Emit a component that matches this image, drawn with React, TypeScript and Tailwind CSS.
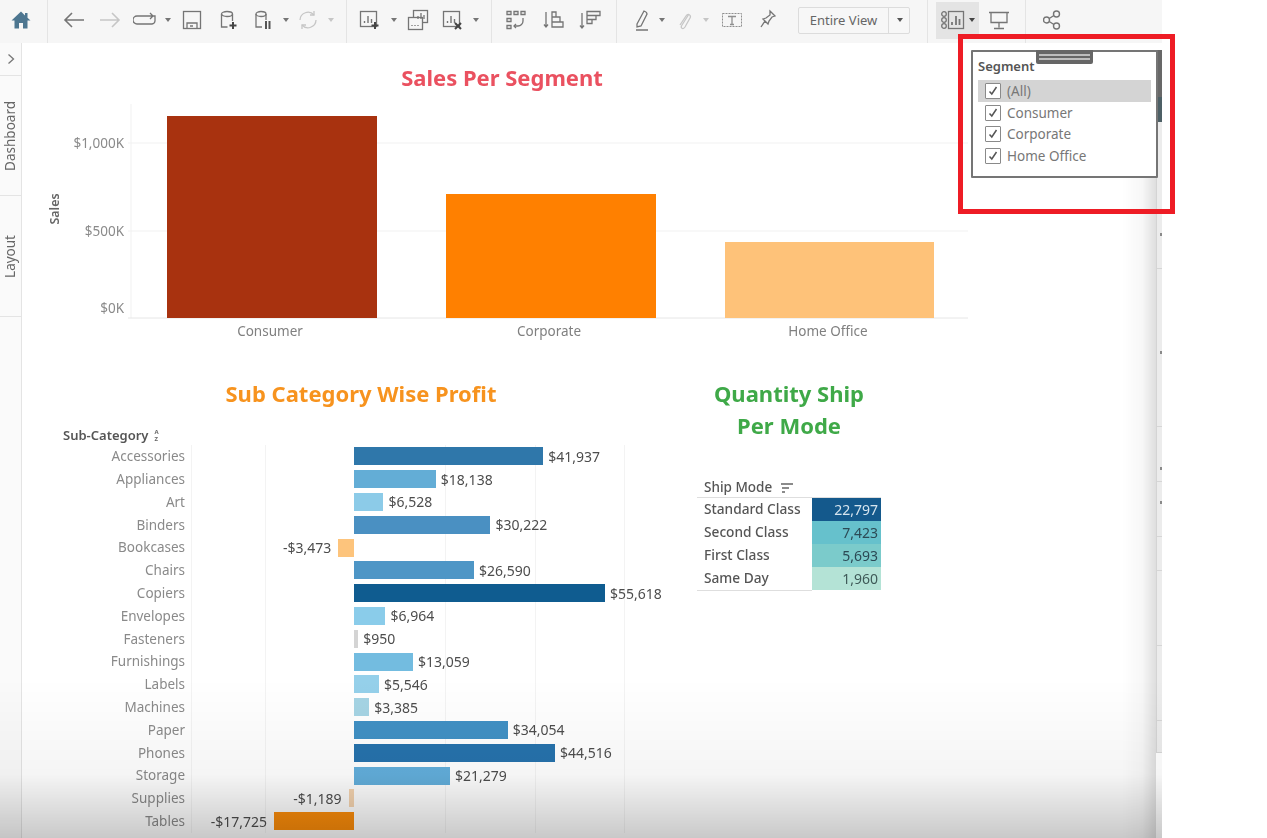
import { FC, ReactNode } from "react";

const font = "font-['Noto_Sans',sans-serif]";

const subCategories = [
	{ name: "Accessories", profit: 41937, color: "#2f77aa" },
	{ name: "Appliances", profit: 18138, color: "#63add6" },
	{ name: "Art", profit: 6528, color: "#8ccbe8" },
	{ name: "Binders", profit: 30222, color: "#4a90c2" },
	{ name: "Bookcases", profit: -3473, color: "#fdc47c" },
	{ name: "Chairs", profit: 26590, color: "#4e96c6" },
	{ name: "Copiers", profit: 55618, color: "#0f5c90" },
	{ name: "Envelopes", profit: 6964, color: "#8accea" },
	{ name: "Fasteners", profit: 950, color: "#d4d4d4" },
	{ name: "Furnishings", profit: 13059, color: "#73bce0" },
	{ name: "Labels", profit: 5546, color: "#95d0ea" },
	{ name: "Machines", profit: 3385, color: "#a5d4e4" },
	{ name: "Paper", profit: 34054, color: "#4090c4" },
	{ name: "Phones", profit: 44516, color: "#2672ac" },
	{ name: "Storage", profit: 21279, color: "#62aedb" },
	{ name: "Supplies", profit: -1189, color: "#f5d4b0" },
	{ name: "Tables", profit: -17725, color: "#fb8c0a" },
];

const shipModes = [
	{ name: "Standard Class", qty: "22,797", bg: "bg-[#14598c]", text: "text-[#d5e4ee]" },
	{ name: "Second Class", qty: "7,423", bg: "bg-[#66c1cc]", text: "text-[#2c4a55]" },
	{ name: "First Class", qty: "5,693", bg: "bg-[#7bcbcb]", text: "text-[#2c4a55]" },
	{ name: "Same Day", qty: "1,960", bg: "bg-[#b4e3d6]", text: "text-[#3f5a58]" },
];

const stripSegments = [
	{ h: 149, dot: 113 },
	{ h: 158, dot: 82 },
	{ h: 55, dot: 40 },
	{ h: 55, dot: 19 },
	{ h: 34 },
	{ h: 75 },
	{ h: 75 },
	{ h: 32 },
];

const PX_PER_DOLLAR = 0.004513;

const money = (n: number) =>
	`${n < 0 ? "-" : ""}$${Math.abs(n).toLocaleString("en-US")}`;

const Icon: FC<{ w?: number; className?: string; children: ReactNode }> = ({
	w = 22,
	className = "",
	children,
}) => (
	<svg
		width={w}
		height={22}
		viewBox={`0 0 ${w} 22`}
		fill="none"
		stroke="currentColor"
		strokeWidth={1.3}
		className={`shrink-0 ${className}`}
	>
		{children}
	</svg>
);

const Caret: FC<{ className?: string }> = ({ className = "" }) => (
	<svg width="6" height="4" viewBox="0 0 6 4" className={`shrink-0 ${className}`}>
		<path d="M0 0h6L3 4z" fill="currentColor" />
	</svg>
);

const Sep: FC<{ className?: string }> = ({ className = "" }) => (
	<div className={`h-[43px] w-px shrink-0 self-start bg-[#e4e4e4] ${className}`} />
);

const MiniChart = () => (
	<>
		<rect x="1.5" y="2.5" width="16" height="15" />
		<path d="M5.5 14v-2M9 14V7M12.5 14v-4" strokeWidth="1.4" />
	</>
);

const Toolbar = () => (
	<div className="flex h-[43px] shrink-0 items-center bg-[#f6f6f6] pb-[3px] text-[#757575]">
		<svg width="20" height="20" viewBox="0 0 20 20" className="ml-[11px] shrink-0 text-[#4d7690]">
			<path d="M10 1.5 0.5 10.5h3V18.5h4.5v-5.5h4v5.5h4.5V10.5h3l-3-2.8V3h-2.5v2.4z" fill="currentColor" />
		</svg>
		<Sep className="ml-[16px]" />
		<Icon className="ml-[15px]">
			<path d="M21 11H2M9 4 2 11l7 7" strokeWidth="1.6" />
		</Icon>
		<Icon className="ml-[14px] text-[#c6c6c6]">
			<path d="M1 11h19M13 4l7 7-7 7" strokeWidth="1.6" />
		</Icon>
		<Icon w={24} className="ml-[12px]">
			<path d="M17 7H4a3.5 3.5 0 0 0 0 8h15a3.5 3.5 0 0 0 3-3V7h-5zM17 4l3 3-3 3" />
		</Icon>
		<Caret className="ml-[8px]" />
		<Icon className="ml-[10px]">
			<rect x="2.5" y="2.5" width="17" height="17" />
			<path d="M6 19v-5h10v5M9 17h3" />
		</Icon>
		<Icon w={20} className="ml-[16px]">
			<ellipse cx="8" cy="5" rx="5.5" ry="2.5" />
			<path d="M2.5 5v13h6M13.5 5v7" />
			<path d="M14 13v7M10.5 16.500h7" strokeWidth="2" stroke="#444" />
		</Icon>
		<Icon w={18} className="ml-[15px]">
			<ellipse cx="7" cy="5" rx="5" ry="2.500" />
			<path d="M2 5v13h6M12 5v6" />
			<path d="M11 12h2v8h-2zM14.500 12h2v8h-2z" fill="#555" stroke="none" />
		</Icon>
		<Caret className="ml-[11px]" />
		<Icon className="ml-[8px] text-[#c6c6c6]">
			<path d="M3 11a8 8 0 0 1 14-5M19 11a8 8 0 0 1-14 5" />
			<path d="M17 2v4h-4M5 20v-4h4" />
		</Icon>
		<Caret className="ml-[9px] text-[#c6c6c6]" />
		<Sep className="ml-[12px]" />
		<Icon className="ml-[12px]">
			<MiniChart />
			<path d="M16 13v7M12.500 16.500h7" strokeWidth="2" stroke="#444" />
		</Icon>
		<Caret className="ml-[10px]" />
		<Icon className="ml-[10px]">
			<rect x="6.500" y="1.500" width="14" height="12" />
			<rect x="1.500" y="8.500" width="14" height="12" fill="#f6f6f6" />
			<path d="M11 10V7M14 10V4M17 10V6M5 17v-1M8 17v-1M11 17v-1" />
		</Icon>
		<Icon className="ml-[13px]">
			<MiniChart />
			<path d="m13 14 6 6M19 14l-6 6" strokeWidth="2" stroke="#444" />
		</Icon>
		<Caret className="ml-[9px]" />
		<Sep className="ml-[12px]" />
		<Icon className="ml-[13px]">
			<path d="M2 2.500h4v3H2zM9 2.500h4v3H9zM16 2.500h4v3h-4zM2 9.500h4v3H2zM2 16.500h4v3H2z" />
			<path d="M18 9v3a5 5 0 0 1-5 5H9" />
			<path d="m11 15-2 2 2 2" />
		</Icon>
		<Icon className="ml-[16px]">
			<path d="M3 3v15M1 15.500 3 18l2-2.500" />
			<path d="M9 3h4v5H9zM9 8h8v5H9zM9 13h11v5H9z" />
		</Icon>
		<Icon className="ml-[14px]">
			<path d="M3 4v15M1 16.500 3 19l2-2.500" />
			<path d="M8 2.500h13v4H8zM8 6.500h9v4H8zM8 10.500h5v4H8z" />
		</Icon>
		<Sep className="ml-[15px]" />
		<Icon w={14} className="ml-[18px]">
			<path d="M2 15 9 2q3 1 3 3L6 17l-4 1zM1 21h12" />
		</Icon>
		<Caret className="ml-[10px]" />
		<Icon w={15} className="ml-[12px] text-[#c6c6c6]">
			<path d="M12 5 5 16c-2 3 1 5 3 2l5-9c1.500-3-2-5-4-2L3 16" />
		</Icon>
		<Caret className="ml-[11px] text-[#c6c6c6]" />
		<svg width="20" height="20" viewBox="0 0 20 20" className="ml-[13px] shrink-0 text-[#8f8f8f]">
			<rect x="0.500" y="3.500" width="19" height="13" fill="none" stroke="currentColor" strokeDasharray="2 1" />
			<path d="M6 6.500h8M10 6.500v8M8 14.500h4" fill="none" stroke="currentColor" strokeWidth="1.300" />
		</svg>
		<Icon w={16} className="ml-[18px]">
			<path d="M10 2 15 7l-3 1-3 4-1 3-5-5 3-1 4-3zM5 12l-4 6" />
		</Icon>
		<div className="ml-[22px] flex h-[27px] w-[112px] shrink-0 items-center rounded-[2px] border border-[#dcdcdc] bg-[#f7f7f7]">
			<span className={`w-[89px] text-center text-[13px] leading-none text-[#666] ${font}`}>Entire View</span>
			<div className="h-full w-px bg-[#dcdcdc]" />
			<Caret className="ml-[8px] text-[#555]" />
		</div>
		<Sep className="ml-[17px]" />
		<div className="ml-[8px] flex h-[37px] w-[43px] shrink-0 items-center bg-[#e4e4e4] pl-[5px]">
			<svg width="24" height="20" viewBox="0 0 24 20" fill="none" stroke="currentColor" strokeWidth="1.300" className="shrink-0">
				<circle cx="3" cy="4" r="2.300" />
				<circle cx="3" cy="10" r="2.300" />
				<circle cx="3" cy="16" r="2.300" />
				<rect x="7.500" y="1.500" width="15" height="17" />
				<path d="M11 15v-3M15 15V6M18.500 15V9" strokeWidth="1.800" />
			</svg>
			<Caret className="ml-[4px] text-[#444]" />
		</div>
		<Icon className="ml-[9px]">
			<path d="M1 3.500h20M3 3.500v10h16v-10M11 13.500v5M6 19.500h10" />
		</Icon>
		<Sep className="ml-[15px]" />
		<svg width="18" height="20" viewBox="0 0 18 20" fill="none" stroke="currentColor" strokeWidth="1.400" className="ml-[17px] shrink-0">
			<circle cx="13.500" cy="4" r="3" />
			<circle cx="3.500" cy="10" r="3" />
			<circle cx="13.500" cy="16" r="3" />
			<path d="m6.200 8.500 4.700-3M6.200 11.500l4.700 3" />
		</svg>
	</div>
);

const SideRail = () => (
	<div className={`flex w-[22px] shrink-0 flex-col border-r border-[#e4e4e4] bg-[#fafafa] text-[13.5px] text-[#666] ${font}`}>
		<div className="flex h-[33px] items-center justify-center border-b border-[#e4e4e4]">
			<svg width="8" height="12" viewBox="0 0 8 12" fill="none" stroke="#777" strokeWidth="1.300">
				<path d="m1.500 1.500 5 4.500-5 4.500" />
			</svg>
		</div>
		<div className="flex h-[120px] items-center justify-center border-b border-[#e4e4e4]">
			<span className="rotate-180 leading-none [writing-mode:vertical-rl]">Dashboard</span>
		</div>
		<div className="flex h-[121px] items-center justify-center border-b border-[#e4e4e4]">
			<span className="rotate-180 leading-none [writing-mode:vertical-rl]">Layout</span>
		</div>
	</div>
);

const SalesChart = () => (
	<section className="h-[308px]">
		<h2 className={`w-[960px] pb-[1px] pt-[19px] text-center text-[22px] font-bold leading-[30px] text-[#ea5160] ${font}`}>
			Sales Per Segment
		</h2>
		<svg width="960" height="250" viewBox="22 93 960 250" className={`block ${font}`}>
			<path d="M131 104V318M128 143H968M128 231H968" stroke="#f1f1f1" fill="none" />
			<path d="M128 318H968" stroke="#e6e6e6" fill="none" />
			<rect x="167" y="116" width="210" height="202" fill="#a8320f" />
			<rect x="446" y="194" width="210" height="124" fill="#ff8000" />
			<rect x="725" y="242" width="209" height="76" fill="#fec279" />
			<g fontSize="13.500" fill="#8a8a8a" textAnchor="end">
				<text x="124" y="148">$1,000K</text>
				<text x="124" y="236">$500K</text>
				<text x="124" y="313">$0K</text>
			</g>
			<text x="0" y="0" fontSize="12.500" fontWeight="600" fill="#666" textAnchor="middle" transform="translate(59 209) rotate(-90)">
				Sales
			</text>
			<g fontSize="13.500" fill="#808080" textAnchor="middle">
				<text x="270" y="336">Consumer</text>
				<text x="549" y="336">Corporate</text>
				<text x="828" y="336">Home Office</text>
			</g>
		</svg>
	</section>
);

const ProfitChart = () => (
	<div className={`w-[675px] shrink-0 ${font}`}>
		<h2 className="pl-[3px] pt-[27px] text-center text-[22px] font-bold leading-[30px] text-[#f7931e]">
			Sub Category Wise Profit
		</h2>
		<div className="mt-[19px] flex h-[18px] items-center pl-[41px] text-[13px] font-semibold text-[#555]">
			Sub-Category
			<span className="ml-[6px] flex flex-col text-[6px] font-bold leading-[7px] text-[#666]">
				<span>A</span>
				<span>Z</span>
			</span>
		</div>
		<div className="relative">
			{[169, 243, 423, 513, 602].map((x) => (
				<div key={x} className="absolute bottom-0 top-0 w-px bg-[#f3f3f3]" style={{ left: x }} />
			))}
			{subCategories.map((row) => {
				const width = Math.abs(row.profit) * PX_PER_DOLLAR;
				return (
					<div key={row.name} className="relative flex h-[22.8px] items-center">
						<div className="w-[163px] shrink-0 text-right text-[13.5px] text-[#8a8a8a]">{row.name}</div>
						<div className="ml-[6px] flex h-full w-[163px] shrink-0 items-center justify-end">
							{row.profit < 0 && (
								<>
									<span className="mr-[7px] text-[14px] text-[#4d4d4d]">{money(row.profit)}</span>
									<div className="h-[18px]" style={{ width, backgroundColor: row.color }} />
								</>
							)}
						</div>
						{row.profit > 0 && (
							<>
								<div className="h-[18px]" style={{ width, backgroundColor: row.color }} />
								<span className="ml-[5px] text-[14px] text-[#4d4d4d]">{money(row.profit)}</span>
							</>
						)}
					</div>
				);
			})}
		</div>
	</div>
);

const ShipTable = () => (
	<div className={`w-[184px] shrink-0 ${font}`}>
		<h2 className="pt-[26px] text-center text-[22px] font-bold leading-[32px] text-[#3fa948]">
			Quantity Ship
			<br />
			Per Mode
		</h2>
		<div className="mt-[35px] flex h-[22px] items-center border-b border-[#dedede] pl-[7px] pt-[2px] text-[13.5px] font-medium text-[#555]">
			Ship Mode
			<svg width="12" height="10" viewBox="0 0 12 10" fill="none" stroke="#666" strokeWidth="1.300" className="ml-[9px]">
				<path d="M0 1h12M1 5h7M1 9h3" />
			</svg>
		</div>
		{shipModes.map((m) => (
			<div key={m.name} className="flex h-[23px] items-center">
				<div className="w-[115px] pl-[7px] text-[13.7px] font-medium text-[#555]">{m.name}</div>
				<div className={`flex h-full w-[69px] items-center justify-end pr-[3px] text-[14px] ${m.bg} ${m.text}`}>
					{m.qty}
				</div>
			</div>
		))}
		<div className="h-px w-[115px] bg-[#dedede]" />
	</div>
);

const FilterCard = () => (
	<div className={`absolute left-[971px] top-[50px] h-[128px] w-[187px] rounded-[1px] border-2 border-[#757575] bg-white pl-[5px] pr-[5px] ${font}`}>
		<div className="absolute left-[63px] top-[-2px] flex h-[14px] w-[57px] flex-col justify-center gap-[2px] rounded-b-[2px] bg-[#666] px-[3px]">
			<div className="h-[2px] bg-[#bdbdbd]" />
			<div className="h-[2px] bg-[#bdbdbd]" />
		</div>
		<div className="pt-[5px] text-[13px] font-semibold leading-[18px] text-[#555]">Segment</div>
		<div className="mt-[5px]">
			{["(All)", "Consumer", "Corporate", "Home Office"].map((label, i) => (
				<div
					key={label}
					className={`flex h-[21.8px] items-center pl-[7px] text-[13.5px] text-[#777] ${i === 0 ? "bg-[#d4d4d4]" : ""}`}
				>
					<span className="flex h-[16px] w-[16px] items-center justify-center rounded-[1px] border-[1.5px] border-[#8a8a8a] bg-white">
						<svg width="10" height="10" viewBox="0 0 10 10" fill="none" stroke="#555" strokeWidth="1.500">
							<path d="m1.500 5.500 2.300 2.500 4.700-7" />
						</svg>
					</span>
					<span className="ml-[6px]">{label}</span>
				</div>
			))}
		</div>
	</div>
);

export default function App() {
	return (
		<div className="relative h-[838px] w-[1267px] overflow-hidden bg-white">
			<div className="relative flex h-full w-[1162px] flex-col overflow-hidden blur-[0.5px]">
				<Toolbar />
				<div className="flex min-h-0 flex-1">
					<SideRail />
					<div className="flex-1">
						<SalesChart />
						<div className="flex">
							<ProfitChart />
							<ShipTable />
						</div>
					</div>
				</div>
				{/* shading along the right and bottom edges of the window */}
				<div className="absolute bottom-0 left-[1122px] top-[100px] w-[34px] bg-[linear-gradient(to_right,rgba(0,0,0,0),rgba(0,0,0,0.03)_60%,rgba(0,0,0,0.13))]" />
				<div className="absolute left-[1156px] top-[120px] flex w-[6px] flex-col border-l border-[#d4d4d4] bg-[#ececec]">
					{stripSegments.map((s, i) => (
						<div key={i} className="border-b border-[#d6d6d6]" style={{ height: s.h }}>
							{s.dot && <div className="ml-[3px] h-[3px] w-[3px] bg-[#8a8a8a]" style={{ marginTop: s.dot }} />}
						</div>
					))}
				</div>
				<div className="absolute bottom-0 left-0 right-0 h-[160px] bg-[linear-gradient(to_bottom,rgba(0,0,0,0),rgba(0,0,0,0.04)_60%,rgba(0,0,0,0.21))]" />
				<div className="absolute left-[1157px] top-[50px] h-[72px] w-[5px] bg-[linear-gradient(to_bottom,#686868_65%,#4d6066_65%)]" />
				<FilterCard />
			</div>
			<div className="absolute left-[958px] top-[34px] h-[180px] w-[217px] border-[5px] border-[#ee1c25]" />
		</div>
	);
}
